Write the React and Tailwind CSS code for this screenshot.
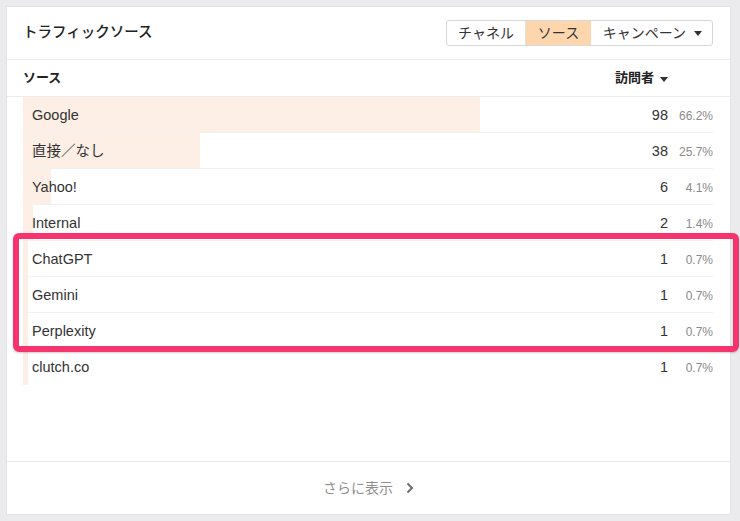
import React from "react";

const rows = [
  { name: "Google", count: 98, pct: 66.2 },
  { name: "直接／なし", count: 38, pct: 25.7 },
  { name: "Yahoo!", count: 6, pct: 4.1 },
  { name: "Internal", count: 2, pct: 1.4 },
  { name: "ChatGPT", count: 1, pct: 0.7 },
  { name: "Gemini", count: 1, pct: 0.7 },
  { name: "Perplexity", count: 1, pct: 0.7 },
  { name: "clutch.co", count: 1, pct: 0.7 },
];

function Caret({ className = "" }) {
  return (
    <svg width="8" height="5" viewBox="0 0 8 5" className={className}>
      <path d="M0 0 L8 0 L4 5 Z" fill="#333" />
    </svg>
  );
}

export default function App() {
  return (
    <div
      className="relative w-[740px] h-[521px] bg-[#ebebed] pt-[6px] pl-[6px] pr-[9px] pb-[6px]"
      style={{ fontFamily: '"Liberation Sans", "Noto Sans CJK JP", sans-serif' }}
    >
      <div className="h-[509px] bg-white border border-[#e3e3e5] flex flex-col">
        {/* title bar */}
        <div className="h-[53px] shrink-0 flex items-center justify-between pl-[16px] pr-[17px] border-b border-[#ececec]">
          <div className="text-[14.5px] font-medium text-[#222]">トラフィックソース</div>
          <div className="flex h-[26px] border border-[#d8d8d8] rounded-[3px] overflow-hidden text-[14px] text-[#333]">
            <div className="w-[79px] flex items-center justify-center border-r border-[#e2e2e2]">チャネル</div>
            <div className="w-[65px] flex items-center justify-center bg-[#fdd6ae]">ソース</div>
            <div className="w-[121px] flex items-center justify-end pr-[10px] gap-[8px]">
              <span>キャンペーン</span>
              <Caret />
            </div>
          </div>
        </div>

        {/* column header */}
        <div className="h-[37px] shrink-0 flex items-center pl-[16px] pr-[17px] border-b border-[#ececec] text-[13px] font-bold text-[#222]">
          <div className="flex-1">ソース</div>
          <div className="flex items-center gap-[6px]">
            <span>訪問者</span>
            <Caret className="mt-[2px]" />
          </div>
          <div className="w-[45px]" />
        </div>

        {/* rows */}
        <div className="pl-[16px] pr-[17px]">
          {rows.map((r, i) => (
            <div
              key={r.name}
              className={
                "relative h-[36px] " +
                (i < rows.length - 1 ? "border-b border-[#f1f1f1]" : "")
              }
            >
              <div
                className="absolute left-0 top-0 bottom-0 bg-[#fdefe5]"
                style={{ width: `${r.pct}%` }}
              />
              <div className="relative h-full flex items-center pl-[9px] pt-[2px]">
                <div className="flex-1 text-[14.5px] text-[#333]">{r.name}</div>
                <div className="text-[14.5px] text-[#333]">{r.count}</div>
                <div className="w-[45px] text-right text-[12px] text-[#8a8a8a]">{r.pct}%</div>
              </div>
            </div>
          ))}
        </div>

        <div className="flex-1" />

        {/* footer */}
        <div className="h-[53px] shrink-0 border-t border-[#ececec] flex items-center justify-center gap-[13px] text-[14px] text-[#8f8f8f]">
          <span>さらに表示</span>
          <svg width="8" height="12" viewBox="0 0 8 12">
            <path d="M1.5 1.5 L6 6 L1.5 10.5" fill="none" stroke="#6e6e6e" strokeWidth="2" />
          </svg>
        </div>
      </div>

      {/* highlight frame */}
      <div className="absolute left-[13px] top-[233px] w-[726px] h-[119px] border-[6px] border-[#f6346e] rounded-[6px] shadow-[0_1px_2px_rgba(0,0,0,0.2)]" />
    </div>
  );
}
